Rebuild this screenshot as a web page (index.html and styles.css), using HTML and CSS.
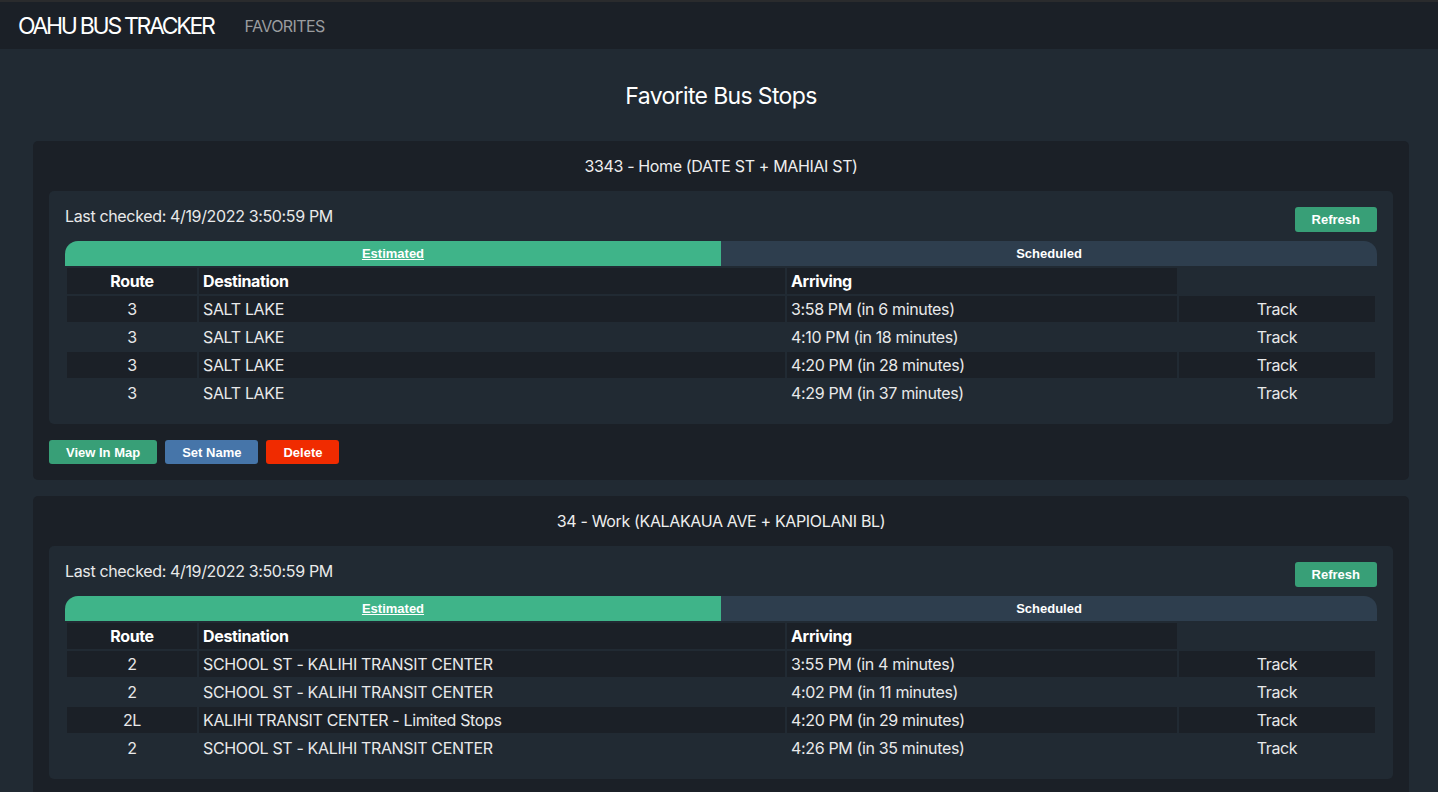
FILE: index.html
```html
<!DOCTYPE html>
<html lang="en">
<head>
<meta charset="utf-8">
<title>Oahu Bus Tracker</title>
<link rel="stylesheet" href="styles.css">
</head>
<body>
<nav class="navbar">
  <span class="brand">OAHU BUS TRACKER</span>
  <a class="nav-link" href="#">FAVORITES</a>
</nav>
<main class="main">
  <h1 class="page-title">Favorite Bus Stops</h1>

  <section class="card">
    <h2 class="card-title">3343 - Home (DATE ST + MAHIAI ST)</h2>
    <div class="panel">
      <div class="panel-head">
        <span class="checked">Last checked: 4/19/2022 3:50:59 PM</span>
        <button class="btn btn-green">Refresh</button>
      </div>
      <div class="tabs">
        <a class="tab tab-active" href="#">Estimated</a>
        <a class="tab tab-other" href="#">Scheduled</a>
      </div>
      <table class="arrivals">
        <colgroup><col class="c-route"><col class="c-dest"><col class="c-arr"><col class="c-track"></colgroup>
        <thead>
          <tr><th class="center">Route</th><th>Destination</th><th>Arriving</th><th class="blank"></th></tr>
        </thead>
        <tbody>
          <tr><td class="center">3</td><td>SALT LAKE</td><td>3:58 PM (in 6 minutes)</td><td class="center">Track</td></tr>
          <tr><td class="center">3</td><td>SALT LAKE</td><td>4:10 PM (in 18 minutes)</td><td class="center">Track</td></tr>
          <tr><td class="center">3</td><td>SALT LAKE</td><td>4:20 PM (in 28 minutes)</td><td class="center">Track</td></tr>
          <tr><td class="center">3</td><td>SALT LAKE</td><td>4:29 PM (in 37 minutes)</td><td class="center">Track</td></tr>
        </tbody>
      </table>
    </div>
    <div class="actions">
      <button class="btn btn-green">View In Map</button>
      <button class="btn btn-blue">Set Name</button>
      <button class="btn btn-red">Delete</button>
    </div>
  </section>

  <section class="card">
    <h2 class="card-title">34 - Work (KALAKAUA AVE + KAPIOLANI BL)</h2>
    <div class="panel">
      <div class="panel-head">
        <span class="checked">Last checked: 4/19/2022 3:50:59 PM</span>
        <button class="btn btn-green">Refresh</button>
      </div>
      <div class="tabs">
        <a class="tab tab-active" href="#">Estimated</a>
        <a class="tab tab-other" href="#">Scheduled</a>
      </div>
      <table class="arrivals">
        <colgroup><col class="c-route"><col class="c-dest"><col class="c-arr"><col class="c-track"></colgroup>
        <thead>
          <tr><th class="center">Route</th><th>Destination</th><th>Arriving</th><th class="blank"></th></tr>
        </thead>
        <tbody>
          <tr><td class="center">2</td><td>SCHOOL ST - KALIHI TRANSIT CENTER</td><td>3:55 PM (in 4 minutes)</td><td class="center">Track</td></tr>
          <tr><td class="center">2</td><td>SCHOOL ST - KALIHI TRANSIT CENTER</td><td>4:02 PM (in 11 minutes)</td><td class="center">Track</td></tr>
          <tr><td class="center">2L</td><td>KALIHI TRANSIT CENTER - Limited Stops</td><td>4:20 PM (in 29 minutes)</td><td class="center">Track</td></tr>
          <tr><td class="center">2</td><td>SCHOOL ST - KALIHI TRANSIT CENTER</td><td>4:26 PM (in 35 minutes)</td><td class="center">Track</td></tr>
        </tbody>
      </table>
    </div>
    <div class="actions">
      <button class="btn btn-green">View In Map</button>
      <button class="btn btn-blue">Set Name</button>
      <button class="btn btn-red">Delete</button>
    </div>
  </section>
</main>
</body>
</html>
```
FILE: styles.css
```css
* { box-sizing: border-box; }
html, body { margin: 0; padding: 0; }
body {
  background: #212a33;
  color: #e8e9ea;
  font-family: Inter, "Noto Sans", sans-serif;
  font-size: 16px;
  letter-spacing: -0.35px;
}
.navbar {
  height: 49px;
  background: #1b2027;
  border-top: 2px solid #2a2b2d;
  display: flex;
  align-items: center;
  padding: 0 18px;
  gap: 31px;
}
.brand {
  font-size: 23px;
  letter-spacing: -2.3px;
  color: #ffffff;
}
.nav-link {
  font-size: 16px;
  color: #9a9c9f;
  text-decoration: none;
  letter-spacing: -0.6px;
}
.main {
  padding: 0 29px 0 33px;
}
.page-title {
  margin: 0;
  height: 92px;
  line-height: 94px;
  text-align: center;
  font-size: 23px;
  font-weight: 400;
  letter-spacing: -0.65px;
  color: #ffffff;
}
.card {
  background: #1b2027;
  border-radius: 5px;
  padding: 12px 16px 16px;
  margin-bottom: 16px;
}
.card-title {
  margin: 0 0 12px;
  line-height: 26px;
  font-size: 16px;
  font-weight: 400;
  text-align: center;
  color: #eeeeee;
}
.panel {
  background: #212a33;
  border-radius: 5px;
  padding: 16px 16px 16px;
}
.panel-head {
  display: flex;
  justify-content: space-between;
  align-items: flex-start;
  height: 25px;
}
.checked {
  line-height: 18px;
}
.btn {
  border: 0;
  border-radius: 3px;
  color: #ffffff;
  font-family: "Liberation Sans", Arial, sans-serif;
  font-weight: 700;
  font-size: 13px;
  letter-spacing: 0;
  height: 24px;
  padding: 0 17px;
  cursor: pointer;
}
.panel-head .btn { height: 25px; }
.btn-green { background: #389f77; }
.btn-blue { background: #4675a9; }
.btn-red { background: #f02b00; }
.tabs {
  margin-top: 9px;
  display: flex;
  height: 25px;
}
.tab {
  flex: 1 1 0;
  display: flex;
  align-items: center;
  justify-content: center;
  font-family: "Liberation Sans", Arial, sans-serif;
  font-weight: 700;
  font-size: 13px;
  letter-spacing: 0;
  color: #ffffff;
}
.tab-active {
  background: #3fb489;
  border-top-left-radius: 13px;
  text-decoration: underline;
}
.tab-other {
  background: #2e3e4e;
  border-top-right-radius: 13px;
  text-decoration: none;
}
.arrivals {
  width: 100%;
  table-layout: fixed;
  border-collapse: separate;
  border-spacing: 2px;
}
.c-route { width: 130px; }
.c-dest { width: 586px; }
.c-arr { width: 390px; }
.c-track { width: 196px; }
.arrivals th, .arrivals td {
  height: 26px;
  padding: 0 4px;
  text-align: left;
  line-height: 26px;
  white-space: nowrap;
}
.arrivals th {
  background: #1b2027;
  font-weight: 700;
  color: #ffffff;
}
.arrivals th.blank { background: transparent; }
.arrivals tbody tr:nth-child(odd) td { background: #1b2027; }
.arrivals .center { text-align: center; }
.actions {
  margin-top: 16px;
  display: flex;
  gap: 8px;
}
```
